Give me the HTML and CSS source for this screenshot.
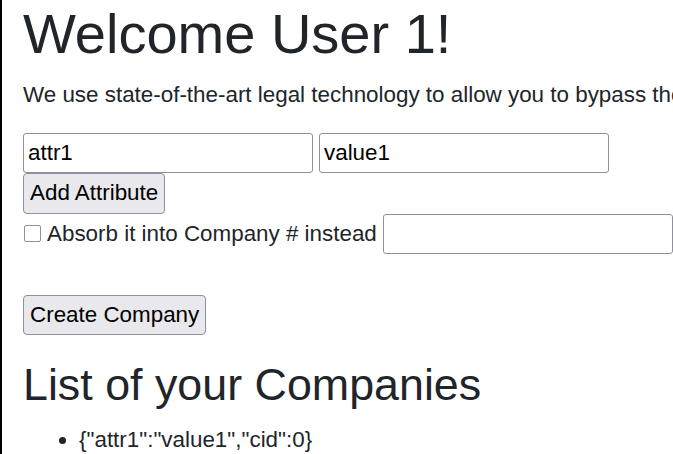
FILE: index.html
```html
<!DOCTYPE html>
<html lang="en">
<head>
<meta charset="utf-8">
<title>Companies</title>
<link rel="stylesheet" href="styles.css">
</head>
<body>
<main class="page">
  <h1 class="title">Welcome User 1!</h1>
  <p class="intro">We use state-of-the-art legal technology to allow you to bypass the government and create companies in seconds.</p>
  <form class="company-form">
    <div class="attr-row">
      <input class="field" type="text" value="attr1">
      <input class="field" type="text" value="value1">
    </div>
    <button class="btn add" type="button">Add Attribute</button>
    <div class="absorb-row">
      <input class="check" type="checkbox" id="absorb">
      <label class="absorb-label" for="absorb">Absorb it into Company # instead</label>
      <input class="field" type="text">
    </div>
    <button class="btn create" type="button">Create Company</button>
  </form>
  <h2 class="subtitle">List of your Companies</h2>
  <ul class="company-list">
    <li>{"attr1":"value1","cid":0}</li>
  </ul>
</main>
</body>
</html>
```

FILE: styles.css
```css
html, body {
  margin: 0;
  padding: 0;
  background: #fff;
  overflow: hidden;
}

body {
  border-left: 2px solid #000;
  min-height: 454px;
  box-sizing: border-box;
  font-family: "Liberation Sans", Arial, sans-serif;
  font-size: 22.4px;
  line-height: 33.6px;
  color: #212529;
}

.page {
  padding-left: 21px;
}

.title {
  margin: 0 0 11.2px;
  font-size: 56px;
  font-weight: 400;
  line-height: 67.2px;
}

.intro {
  margin: 0 0 21px;
  white-space: nowrap;
}

.company-form {
  display: flex;
  flex-direction: column;
  align-items: flex-start;
}

.attr-row,
.absorb-row {
  display: flex;
  flex-wrap: nowrap;
  align-items: center;
  gap: 6px;
  white-space: nowrap;
}

.attr-row > *,
.absorb-row > * {
  flex-shrink: 0;
}

.field {
  box-sizing: border-box;
  width: 290px;
  height: 40px;
  margin: 0;
  padding: 0 4px;
  border: 1px solid #8f8f9d;
  border-radius: 3px;
  background: #fff;
  font-family: inherit;
  font-size: 22.4px;
  color: #000;
}

.btn {
  box-sizing: border-box;
  height: 40px;
  margin: 0;
  padding: 0 6px;
  border: 1px solid #8f8f9d;
  border-radius: 4px;
  background: #e9e9ed;
  font-family: inherit;
  font-size: 22.4px;
  color: #000;
}

.add {
  height: 41px;
}

.check {
  appearance: none;
  -webkit-appearance: none;
  box-sizing: border-box;
  width: 17px;
  height: 17px;
  margin: 0 0 0 1px;
  border: 1.5px solid #8f8f9d;
  border-radius: 2px;
  background: #fff;
}

.create {
  margin-top: 41px;
}

.subtitle {
  margin: 23px 0 11.2px;
  font-size: 44.8px;
  font-weight: 400;
  line-height: 53.8px;
}

.company-list {
  margin: 0;
  padding-left: 56px;
}
```
